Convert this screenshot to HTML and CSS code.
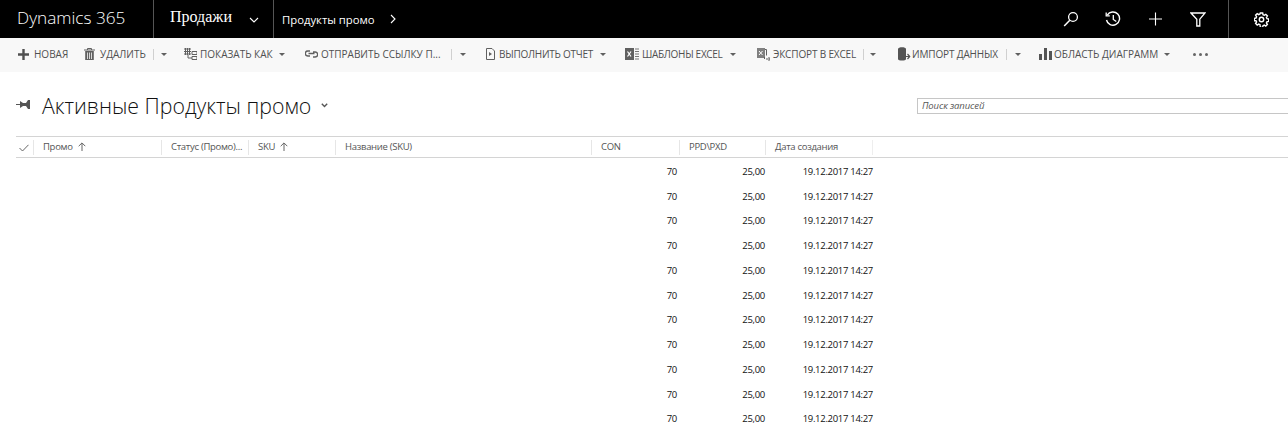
FILE: index.html
```html
<!DOCTYPE html>
<html lang="ru">
<head>
<meta charset="utf-8">
<title>Активные Продукты промо</title>
<link rel="stylesheet" href="styles.css">
</head>
<body>
<header class="topbar">
  <div class="brand">Dynamics 365</div>
  <div class="area"><span class="area-name">Продажи</span>
    <svg class="ico-chev" width="10" height="6" viewBox="0 0 10 6"><path d="M1 1l4 4 4-4" fill="none" stroke="#fff" stroke-width="1.1"/></svg>
  </div>
  <div class="crumb"><span>Продукты промо</span>
    <svg class="ico-next" width="6" height="10" viewBox="0 0 6 10"><path d="M1 1l4 4-4 4" fill="none" stroke="#fff" stroke-width="1.1"/></svg>
  </div>
  <div class="top-actions">
    <svg class="top-ico" width="16" height="16" viewBox="0 0 16 16"><circle cx="10" cy="6" r="4.4" fill="none" stroke="#fff" stroke-width="1.3"/><path d="M6.8 9.2L1.2 15" stroke="#fff" stroke-width="1.5" fill="none"/></svg>
    <svg class="top-ico" width="16" height="16" viewBox="0 0 16 16"><path d="M2.3 4.2A6.6 6.6 0 1 1 1.5 9" fill="none" stroke="#fff" stroke-width="1.4"/><path d="M1.2 1.5v3.4h3.6" fill="none" stroke="#fff" stroke-width="1.3"/><path d="M8.3 4v4.5l3 2" fill="none" stroke="#fff" stroke-width="1.3"/></svg>
    <svg class="top-ico" width="16" height="16" viewBox="0 0 16 16"><path d="M7.500 1.500v13M1 8h13" stroke="#fff" stroke-width="1.1" fill="none"/></svg>
    <svg class="top-ico" width="16" height="16" viewBox="0 0 16 16"><path d="M1 2h14L9.800 8.200V15H6.800V8.200z" fill="none" stroke="#fff" stroke-width="1.300"/></svg>
  </div>
  <div class="settings">
    <svg width="15" height="15" viewBox="0 0 15 15"><circle cx="7.500" cy="7.500" r="2.200" fill="none" stroke="#fff" stroke-width="1.400"/><path d="M6.300 1h2.400l.3 1.700 1.300.6 1.500-1 1.600 1.600-1 1.500.6 1.300 1.700.3v2.400l-1.700.3-.6 1.300 1 1.500-1.600 1.600-1.500-1-1.300.6-.3 1.700H6.300L6 12.700l-1.300-.6-1.500 1-1.600-1.600 1-1.500-.6-1.300L.3 8.700V6.300L2 6l.6-1.300-1-1.500 1.600-1.600 1.500 1L6 2z" fill="none" stroke="#fff" stroke-width="1.400"/></svg>
  </div>
</header>

<nav class="cmdbar">
  <span class="cmd cmd-new">
    <svg class="cmd-ico" width="11" height="11" viewBox="0 0 11 11"><path d="M5.500 0v11M0 5.500h11" stroke="#505050" stroke-width="2.400" fill="none"/></svg>
    <span class="cmd-label">НОВАЯ</span>
  </span>
  <span class="cmd cmd-del">
    <svg class="cmd-ico" width="11" height="12" viewBox="0 0 11 12"><path d="M0 2h11M3.500 2V.5h4V2" stroke="#606060" fill="none"/><path d="M1.200 3h8.600v9H1.200z" fill="#606060"/><path d="M3.500 4.500V11M5.500 4.500V11M7.500 4.500V11" stroke="#f8f8f8" stroke-width=".8"/></svg>
    <span class="cmd-label">УДАЛИТЬ</span>
  </span>
  <i class="sep sep-del"></i><i class="caret caret-del"></i>
  <span class="cmd cmd-show">
    <svg class="cmd-ico" width="13" height="12" viewBox="0 0 13 12"><path d="M0 1h7M0 3.500h7M0 6h7M1.500 0v7M3.500 0v7M5.500 0v7M8 3.500h5v3H8zM8 8.500h5v3H8zM4 7v3h4" stroke="#606060" stroke-width="1" fill="none"/></svg>
    <span class="cmd-label">ПОКАЗАТЬ КАК</span>
  </span>
  <i class="caret caret-show"></i>
  <span class="cmd cmd-send">
    <svg class="cmd-ico" width="13" height="8" viewBox="0 0 13 8"><path d="M5 1H2.800a2.500 2.500 0 0 0 0 5H5M8 2h2.200a2.500 2.500 0 0 1 0 5H8M3.500 3.500h6" stroke="#606060" stroke-width="1.400" fill="none"/></svg>
    <span class="cmd-label">ОТПРАВИТЬ ССЫЛКУ П...</span>
  </span>
  <i class="sep sep-send"></i><i class="caret caret-send"></i>
  <span class="cmd cmd-run">
    <svg class="cmd-ico" width="9" height="12" viewBox="0 0 9 12"><path d="M.5.500h5.500l2.500 2.500v8.500h-8z" fill="none" stroke="#606060"/><path d="M3 4l3 2-3 2z" fill="#606060"/></svg>
    <span class="cmd-label">ВЫПОЛНИТЬ ОТЧЕТ</span>
  </span>
  <i class="caret caret-run"></i>
  <span class="cmd cmd-xl">
    <svg class="cmd-ico" width="14" height="12" viewBox="0 0 14 12"><path d="M0 0h9v12H0z" fill="#606060"/><path d="M2.500 3.500l3.500 5M6 3.500l-3.500 5" stroke="#fff" stroke-width="1.200"/><path d="M10 1h4M10 3.500h4M10 6h4M10 8.500h4M10 11h4" stroke="#777" stroke-width="1"/></svg>
    <span class="cmd-label">ШАБЛОНЫ EXCEL</span>
  </span>
  <i class="caret caret-xl"></i>
  <span class="cmd cmd-exp">
    <svg class="cmd-ico" width="13" height="13" viewBox="0 0 13 13"><path d="M0 0h8v10H0z" fill="#808080"/><path d="M2 3l3.500 4M5.500 3L2 7" stroke="#fff"/><path d="M8 1.500h1.500v6M9 11h4M11.500 9l2 2-2 2M7.500 9v2" stroke="#606060" fill="none"/></svg>
    <span class="cmd-label">ЭКСПОРТ В EXCEL</span>
  </span>
  <i class="sep sep-exp"></i><i class="caret caret-exp"></i>
  <span class="cmd cmd-imp">
    <svg class="cmd-ico" width="13" height="14" viewBox="0 0 13 14"><path d="M0 2c0-2.500 8-2.500 8 0v10c0 2-8 2-8 0z" fill="#555"/><path d="M6 13v-3.500M6 9.500h5.500M9.500 7l2.200 2.500L9.500 12" stroke="#555" stroke-width="1.200" fill="#f8f8f8"/></svg>
    <span class="cmd-label">ИМПОРТ ДАННЫХ</span>
  </span>
  <i class="sep sep-imp"></i><i class="caret caret-imp"></i>
  <span class="cmd cmd-chart">
    <svg class="cmd-ico" width="13" height="12" viewBox="0 0 13 12"><path d="M0 6h3v6H0zM5 0h3v12H5zM10 3h3v9h-3z" fill="#555"/></svg>
    <span class="cmd-label">ОБЛАСТЬ ДИАГРАММ</span>
  </span>
  <i class="caret caret-chart"></i>
  <span class="dots"><b></b><b></b><b></b></span>
</nav>

<main class="view">
  <div class="view-head">
    <svg class="pin" width="14" height="9" viewBox="0 0 14 9"><path d="M0 4h5v1H0z" fill="#555"/><path d="M4 1l3 2h3l2-3h2v9h-2l-2-3H7l-3 2z" fill="#555"/></svg>
    <h1 class="view-title">Активные Продукты промо</h1>
    <svg class="view-chev" width="7" height="5" viewBox="0 0 7 5"><path d="M.8.800l2.700 2.700L6.200.800" fill="none" stroke="#555" stroke-width="1.400"/></svg>
    <div class="search">Поиск записей</div>
  </div>

  <div class="grid">
    <div class="hdr">
      <div class="th th-check"><svg width="10" height="8" viewBox="0 0 10 8"><path d="M.5 4l3 3L9.500.800" fill="none" stroke="#666" stroke-width="1"/></svg></div>
      <div class="th">Промо <svg class="arrow" width="8" height="9" viewBox="0 0 8 9"><path d="M4 9V1M.7 4.200L4 .9l3.300 3.300" fill="none" stroke="#666" stroke-width="1"/></svg></div>
      <div class="th">Статус (Промо)...</div>
      <div class="th">SKU <svg class="arrow" width="8" height="9" viewBox="0 0 8 9"><path d="M4 9V1M.7 4.200L4 .9l3.300 3.300" fill="none" stroke="#666" stroke-width="1"/></svg></div>
      <div class="th">Название (SKU)</div>
      <div class="th">CON</div>
      <div class="th">PPD\PXD</div>
      <div class="th th-last">Дата создания</div>
    </div>
    <div class="row"><span class="con">70</span><span class="ppd">25,00</span><span class="date">19.12.2017 14:27</span></div>
    <div class="row"><span class="con">70</span><span class="ppd">25,00</span><span class="date">19.12.2017 14:27</span></div>
    <div class="row"><span class="con">70</span><span class="ppd">25,00</span><span class="date">19.12.2017 14:27</span></div>
    <div class="row"><span class="con">70</span><span class="ppd">25,00</span><span class="date">19.12.2017 14:27</span></div>
    <div class="row"><span class="con">70</span><span class="ppd">25,00</span><span class="date">19.12.2017 14:27</span></div>
    <div class="row"><span class="con">70</span><span class="ppd">25,00</span><span class="date">19.12.2017 14:27</span></div>
    <div class="row"><span class="con">70</span><span class="ppd">25,00</span><span class="date">19.12.2017 14:27</span></div>
    <div class="row"><span class="con">70</span><span class="ppd">25,00</span><span class="date">19.12.2017 14:27</span></div>
    <div class="row"><span class="con">70</span><span class="ppd">25,00</span><span class="date">19.12.2017 14:27</span></div>
    <div class="row"><span class="con">70</span><span class="ppd">25,00</span><span class="date">19.12.2017 14:27</span></div>
    <div class="row"><span class="con">70</span><span class="ppd">25,00</span><span class="date">19.12.2017 14:27</span></div>
  </div>
</main>
</body>
</html>
```
FILE: styles.css
```css
* { box-sizing: border-box; }
html, body { margin: 0; height: 100%; overflow: hidden; background: #fff; }
body { font-family: "Open Sans", "Noto Sans", sans-serif; color: #000; }

/* Top bar */
.topbar { display: flex; align-items: center; height: 38px; background: #000; color: #fff; }
.brand { width: 154px; height: 38px; padding-left: 17px; border-right: 1px solid #555; font-size: 17.200px; font-weight: 300; line-height: 36px; color: #fff; }
.area { display: flex; align-items: center; width: 120px; height: 38px; padding-left: 16px; border-right: 1px solid #555; }
.area-name { font-family: "Liberation Serif", serif; font-size: 16px; width: 79px; padding-bottom: 4px; }
.ico-chev { display: block; margin-top: 2px; }
.crumb { display: flex; align-items: center; padding-left: 8px; font-size: 11.300px; height: 38px; }
.ico-next { margin-left: 15px; }
.top-actions { display: flex; align-items: center; gap: 26.500px; margin-left: auto; }
.top-ico { display: block; }
.settings { display: flex; align-items: center; height: 38px; width: 60px; margin-left: 22px; padding-left: 25px; border-left: 1px solid #555; }

/* Command bar */
.cmdbar { display: flex; align-items: center; height: 34px; padding: 0 0 2px 18px; background: #f8f8f8; color: #505050; font-size: 10px; white-space: nowrap; }
.cmd { display: flex; align-items: center; flex: none; }
.cmd-ico { flex: none; display: block; }
.cmd-label { display: block; }
.cmd-new { width: 66px; gap: 5px; }
.cmd-del { width: 62px; gap: 5px; }
.sep { flex: none; width: 1px; height: 11px; background: #d0d0d0; margin-left: 7px; }
.caret { flex: none; width: 0; height: 0; margin-left: 7px; border: 3px solid transparent; border-top: 3px solid #606060; border-bottom: 0; }
.cmd-show { width: 90px; gap: 3px; margin-left: 17px; }
.caret-show { margin-left: 5px; }
.cmd-send { width: 133px; gap: 3px; margin-left: 20px; }
.sep-send { margin-left: 13px; }
.caret-send { margin-left: 8px; }
.cmd-run { width: 108px; gap: 4px; margin-left: 20px; }
.cmd-run .cmd-label { letter-spacing: -0.25px; }
.caret-run { margin-left: 6px; }
.cmd-xl { width: 95px; gap: 3px; margin-left: 19px; }
.cmd-xl .cmd-label { letter-spacing: -0.3px; }
.caret-xl { margin-left: 10px; }
.cmd-exp { width: 98px; gap: 3px; margin-left: 21px; }
.cmd-exp .cmd-label { letter-spacing: -0.15px; }
.sep-exp { margin-left: 8px; }
.caret-exp { margin-left: 6px; }
.cmd-imp { width: 101px; gap: 1px; margin-left: 22px; }
.cmd-imp .cmd-label { letter-spacing: -0.15px; }
.sep-imp { margin-left: 7px; }
.caret-imp { margin-left: 8px; }
.cmd-chart { width: 119px; gap: 2px; margin-left: 18px; }
.caret-chart { margin-left: 6px; }
.dots { display: flex; gap: 3px; margin-left: 23px; }
.dots b { width: 3px; height: 3px; border-radius: 50%; background: #666; }

/* View header */
.view { padding-left: 16px; }
.view-head { display: flex; align-items: center; height: 64px; padding-top: 4px; }
.pin { flex: none; margin-top: -4px; }
.view-title { margin: 0 0 0 12px; font-size: 21.300px; font-weight: 300; line-height: 28px; color: #111; white-space: nowrap; }
.view-chev { flex: none; margin-left: 10px; margin-top: -2px; }
.search { flex: none; margin-left: auto; width: 371px; height: 16px; padding-left: 4px; border: 1px solid #c6c6c6; border-right: 0; font-size: 9.500px; font-style: italic; line-height: 14px; color: #555; letter-spacing: -0.1px; }

/* Grid */
.hdr, .row { display: grid; grid-template-columns: 17px 128px 87px 87px 256px 88px 86px 108px; }
.hdr { height: 22px; margin-bottom: 1px; border-top: 1px solid #d4d4d4; border-bottom: 1px solid #d4d4d4; }
.th { display: flex; align-items: center; gap: 5px; padding: 0 0 2px 9px; border-left: 1px solid #e6e6e6; margin: 3px 0; font-size: 9.500px; letter-spacing: -0.3px; color: #555; white-space: nowrap; }
.th-check { padding: 0 0 0 3px; border-left: 0; }
.th-last { border-right: 1px solid #eee; }
.arrow { display: block; flex: none; }
.row { height: 24.750px; align-items: center; font-size: 9.500px; letter-spacing: -0.3px; color: #111; }
.con { grid-column: 6; text-align: right; padding-right: 2px; }
.ppd { grid-column: 7; text-align: right; }
.date { grid-column: 8; text-align: right; white-space: nowrap; }
```
